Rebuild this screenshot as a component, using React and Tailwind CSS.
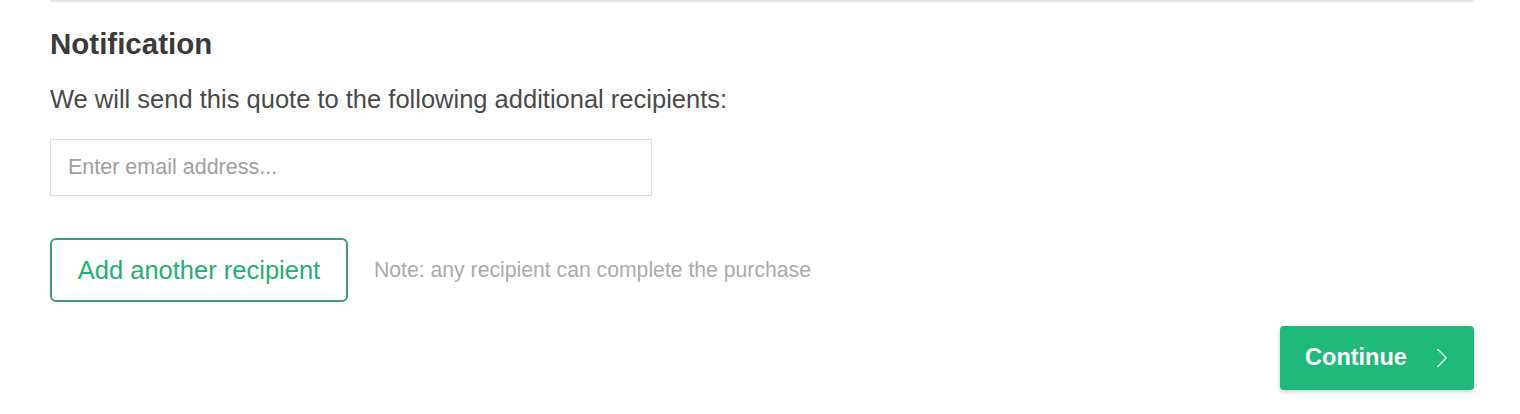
import { ChevronRight } from 'lucide-react';

export default function App() {
  return (
    <div className="min-h-screen w-full bg-white font-['Liberation_Sans',Arial,sans-serif]">
      <div className="mx-[50px] w-[1424px]">
        <div className="h-[2px] bg-[#e6e6e6]" />
        <h2 className="mt-[25px] text-[29.5px] leading-[34px] font-bold text-[#3a3a3a]">
          Notification
        </h2>
        <p className="mt-[23px] text-[25.5px] leading-[30px] text-[#4a4a4a]">
          We will send this quote to the following additional recipients:
        </p>
        <input
          type="text"
          placeholder="Enter email address..."
          className="mt-[25px] block h-[57px] w-[602px] border border-[#dedede] px-[17px] text-[21.5px] text-[#444] placeholder:text-[#a0a0a0] outline-none"
        />
        <div className="mt-[42px] flex items-center gap-[26px]">
          <button className="h-[64px] w-[298px] rounded-[6px] border-2 border-[#3f9a77] text-[25.5px] text-[#27ae75]">
            Add another recipient
          </button>
          <span className="text-[21.2px] text-[#ababab]">
            Note: any recipient can complete the purchase
          </span>
        </div>
        <div className="mt-[24px] flex justify-end">
          <button className="flex h-[64px] w-[194px] items-center justify-center gap-[18px] rounded-[4px] bg-[#1fba79] pl-[10px] text-[23.5px] font-bold text-white shadow-[0_2px_4px_rgba(0,0,0,0.2)]">
            Continue
            <ChevronRight className="h-[34px] w-[34px] text-[#d8ffe9]" strokeWidth={1.1} />
          </button>
        </div>
      </div>
    </div>
  );
}
